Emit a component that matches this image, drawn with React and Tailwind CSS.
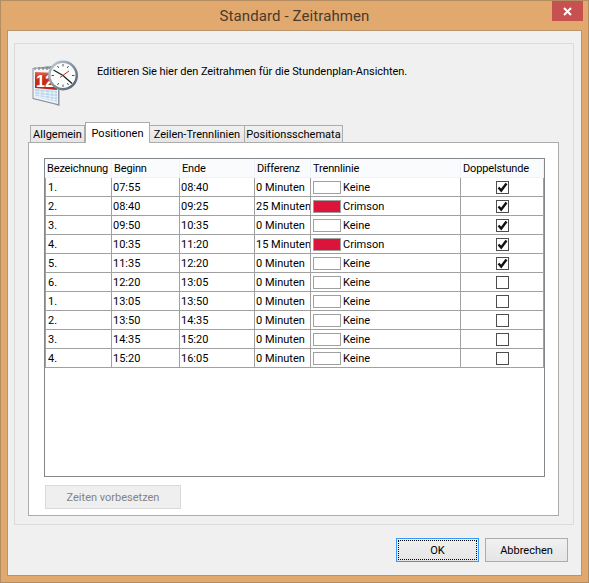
const rows = [
  { name: '1.', start: '07:55', end: '08:40', diff: '0 Minuten', line: 'Keine', checked: true },
  { name: '2.', start: '08:40', end: '09:25', diff: '25 Minuten', line: 'Crimson', checked: true },
  { name: '3.', start: '09:50', end: '10:35', diff: '0 Minuten', line: 'Keine', checked: true },
  { name: '4.', start: '10:35', end: '11:20', diff: '15 Minuten', line: 'Crimson', checked: true },
  { name: '5.', start: '11:35', end: '12:20', diff: '0 Minuten', line: 'Keine', checked: true },
  { name: '6.', start: '12:20', end: '13:05', diff: '0 Minuten', line: 'Keine', checked: false },
  { name: '1.', start: '13:05', end: '13:50', diff: '0 Minuten', line: 'Keine', checked: false },
  { name: '2.', start: '13:50', end: '14:35', diff: '0 Minuten', line: 'Keine', checked: false },
  { name: '3.', start: '14:35', end: '15:20', diff: '0 Minuten', line: 'Keine', checked: false },
  { name: '4.', start: '15:20', end: '16:05', diff: '0 Minuten', line: 'Keine', checked: false },
];

const headers = ['Bezeichnung', 'Beginn', 'Ende', 'Differenz', 'Trennlinie', 'Doppelstunde'];
const tabs = [
  { label: 'Allgemein', width: 'w-[55px]' },
  { label: 'Positionen', width: 'w-[65px]', active: true },
  { label: 'Zeilen-Trennlinien', width: 'w-[95px]' },
  { label: 'Positionsschemata', width: 'w-[98px]' },
];

const cols = 'grid grid-cols-[67px_68px_75px_56px_150px_83px]';
const cell = 'flex items-center overflow-hidden whitespace-nowrap border-r border-b border-[#a0a0a0]';

const CalendarClock = () => (
  <svg width="46" height="48" viewBox="0 0 46 48">
    <defs>
      <linearGradient id="rim" x1="0" y1="0" x2="1" y2="1">
        <stop offset="0" stopColor="#c9d2da" />
        <stop offset="0.55" stopColor="#7e8d9b" />
        <stop offset="1" stopColor="#4c5a68" />
      </linearGradient>
      <linearGradient id="red" x1="0" y1="0" x2="0" y2="1">
        <stop offset="0" stopColor="#dc6a50" />
        <stop offset="0.3" stopColor="#c8321f" />
        <stop offset="1" stopColor="#b02a18" />
      </linearGradient>
    </defs>
    <path d="M0.5 10 L20 8 L27.5 13 L27.5 48 L21 46 L0.5 41 Z" fill="#8d949b" />
    <path d="M1.5 10.5 L24 11 L26 15 L26 46 L1.5 40 Z" fill="#f3f4f6" />
    <path d="M3 14 L25 15 L25 32 L3 30 Z" fill="url(#red)" />
    <text x="4" y="29" fontFamily="'Liberation Sans', sans-serif" fontWeight="700" fontSize="16" fill="#ffffff">12</text>
    <path d="M3 31 L25 33 L25 44 L3 38.5 Z" fill="#b5d5f0" />
    <path d="M3 33.5 L25 35.5 M3 36 L25 39 M3 38 L25 42 M8 31.5 L8 39.5 M13 32 L13 41 M18 32.5 L18 42.5 M22 33 L22 43.5" stroke="#f4f9fd" strokeWidth="0.8" fill="none" />
    <path d="M3 9.5 L3 12 M7 9 L7 12 M11 9 L11 12 M15 8.5 L15 12 M19 8.5 L19 12" stroke="#7b838b" strokeWidth="1.2" />
    <circle cx="31" cy="17.5" r="15" fill="url(#rim)" />
    <circle cx="31" cy="17.5" r="12.5" fill="#fbfcfc" />
    <g stroke="#50565c" strokeWidth="1">
      <path d="M31 6 L31 8.5 M31 26.5 L31 29 M19.5 17.5 L22 17.5 M40 17.5 L42.5 17.5 M25.5 8 L26.7 10 M36.5 8 L35.3 10 M25.5 27 L26.7 25 M36.5 27 L35.3 25" />
    </g>
    <path d="M31 17.5 L40 25.5 M31 17.5 L21.5 12" stroke="#1a1c1f" strokeWidth="1.2" fill="none" />
    <path d="M28 19.5 L37 13" stroke="#c8282c" strokeWidth="1" fill="none" />
  </svg>
);

const Check = ({ checked }) => (
  <span className="flex h-[13px] w-[13px] items-center justify-center border border-[#4d4d4d] bg-white">
    {checked && (
      <svg width="11" height="11" viewBox="0 0 11 11">
        <path d="M1.5 5.5 L4.2 8.5 L9.5 1.5" stroke="#111111" strokeWidth="2.4" fill="none" />
      </svg>
    )}
  </span>
);

const App = () => {
  return (
    <div className="h-[583px] w-[589px] border border-[#b58d62] bg-[#e2a96e] px-[6px] pb-[6px] text-[11px] leading-none text-black [font-family:Roboto,sans-serif]">
      <div className="relative flex h-[29px] items-center justify-center pt-[1px] text-[15px] tracking-[0.1px] text-[#4a3a2a]">
        <span>Standard - Zeitrahmen</span>
        <div className="absolute right-[-1px] top-0 flex h-[20px] w-[31px] items-center justify-center bg-[#c75050]">
          <svg width="9" height="9" viewBox="0 0 9 9">
            <path d="M1 1 L8 8 M8 1 L1 8" stroke="#ffffff" strokeWidth="2" />
          </svg>
        </div>
      </div>

      <div className="h-[546px] border border-[#b8956c] bg-[#f0f0f0] pl-[6px] pr-[7px] pt-[12px]">
        <div className="h-[482px] border border-[#dcdcdc] pl-[13px]">
          <div className="-ml-[13px] flex h-[78px] pl-[17px] pt-[14px]">
            <CalendarClock />
            <p className="ml-[19px] mt-[8px] tracking-[-0.05px]">Editieren Sie hier den Zeitrahmen für die Stundenplan-Ansichten.</p>
          </div>

          {/* Tabs */}
          <div className="relative z-10 -mb-px ml-[2px] flex h-[21px] items-end">
            {tabs.map((tab) => (
              <div
                key={tab.label}
                className={
                  tab.active
                    ? `flex h-[21px] items-center justify-center whitespace-nowrap border border-b-0 border-[#acacac] bg-white ${tab.width}`
                    : `flex h-[18px] items-center justify-center whitespace-nowrap border border-l-0 border-[#acacac] bg-gradient-to-b from-[#f0f0f0] to-[#e5e5e5] first:border-l ${tab.width}`
                }
              >
                <span>{tab.label}</span>
              </div>
            ))}
          </div>

          {/* Tab page */}
          <div className="h-[374px] w-[531px] border border-[#acacac] bg-white pl-[15px] pt-[15px]">
            <div className="h-[319px] w-[501px] border border-[#82878c]">
              <div className={`${cols} h-[19px] bg-[#fafbfd] tracking-[-0.15px]`}>
                {headers.map((h) => (
                  <div key={h} className="flex items-center border-b border-r border-[#eef3fa] pl-[2px]">
                    {h}
                  </div>
                ))}
              </div>
              {rows.map((row, i) => (
                <div key={i} className={`${cols} h-[19px]`}>
                  <div className={`${cell} border-l border-l-[#a0a0a0] pl-[2px]`}>{row.name}</div>
                  <div className={`${cell} pl-[1px]`}>{row.start}</div>
                  <div className={`${cell} pl-[1px]`}>{row.end}</div>
                  <div className={`${cell} pl-[1px]`}>{row.diff}</div>
                  <div className={`${cell} pl-[2px]`}>
                    <span
                      className={`h-[13px] w-[28px] border border-[#a0a0a0] ${row.line === 'Crimson' ? 'bg-[#dc143c]' : 'bg-white'}`}
                    />
                    <span className="ml-[2px]">{row.line}</span>
                  </div>
                  <div className={`${cell} justify-center`}>
                    <Check checked={row.checked} />
                  </div>
                </div>
              ))}
            </div>
            <button className="ml-[1px] mt-[8px] flex h-[24px] w-[136px] items-center justify-center border border-[#d9d9d9] bg-[#efefef] text-[#838383]">
              Zeiten vorbesetzen
            </button>
          </div>
        </div>

        {/* Footer buttons */}
        <div className="mt-[13px] flex justify-end gap-[6px] pr-[6px]">
          <button className="relative flex h-[24px] w-[83px] items-center justify-center border border-[#3399ff] bg-gradient-to-b from-[#f0f0f0] to-[#e5e5e5]">
            <span className="absolute inset-[1px] border border-dotted border-black" />
            OK
          </button>
          <button className="flex h-[24px] w-[83px] items-center justify-center border border-[#acacac] bg-gradient-to-b from-[#f0f0f0] to-[#e5e5e5]">
            Abbrechen
          </button>
        </div>
      </div>
    </div>
  );
};

export default App;
